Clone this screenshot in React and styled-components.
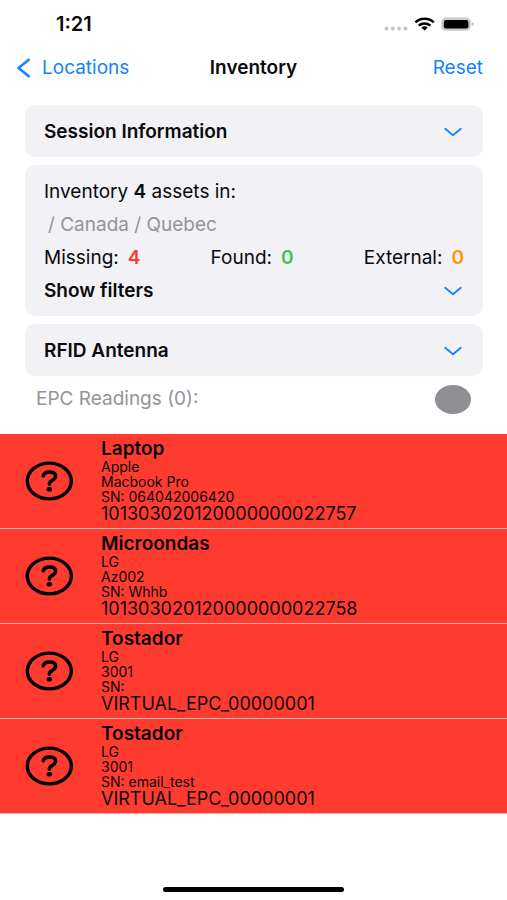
import React from 'react';
import styled, { createGlobalStyle } from 'styled-components';

const COLORS = {
  text: '#0a0a0c',
  blue: '#1583fb',
  card: '#f1f1f6',
  gray: '#949498',
  dot: '#8e8e93',
  red: '#ff3b30',
  green: '#34c759',
  orange: '#ff9500',
  divider: '#ffb0aa',
  black: '#000000',
};

const ASSETS = [
  { id: 1, name: 'Laptop', brand: 'Apple', model: 'Macbook Pro', sn: '064042006420', epc: '101303020120000000022757' },
  { id: 2, name: 'Microondas', brand: 'LG', model: 'Az002', sn: 'Whhb', epc: '101303020120000000022758' },
  { id: 3, name: 'Tostador', brand: 'LG', model: '3001', sn: '', epc: 'VIRTUAL_EPC_00000001' },
  { id: 4, name: 'Tostador', brand: 'LG', model: '3001', sn: 'email_test', epc: 'VIRTUAL_EPC_00000001' },
];

const Chevron = () => (
  <svg width="18" height="10" viewBox="0 0 18 10" fill="none" aria-hidden="true">
    <path d="M1.2 1.8L9 8.2L16.8 1.8" stroke={COLORS.blue} strokeWidth="1.8" strokeLinecap="round" strokeLinejoin="round" />
  </svg>
);

const BackArrow = () => (
  <svg width="14" height="20" viewBox="0 0 14 20" fill="none" aria-hidden="true">
    <path d="M12.8 1.8L2.4 10L12.8 18.2" stroke={COLORS.blue} strokeWidth="2.5" strokeLinecap="round" strokeLinejoin="round" />
  </svg>
);

const StatusIcons = () => (
  <svg width="92" height="16" viewBox="0 0 92 16" fill="none" aria-hidden="true">
    <g fill="#c4c4c6">
      <circle cx="3.5" cy="12.5" r="1.9" />
      <circle cx="9.8" cy="12.5" r="1.9" />
      <circle cx="16.1" cy="12.5" r="1.9" />
      <circle cx="22.4" cy="12.5" r="1.9" />
    </g>
    <g stroke="#000" strokeWidth="2.4">
      <path d="M32.4 6.4C37.4 1.6 45.8 1.6 50.8 6.4" />
      <path d="M35.8 9.6C39 6.7 44.2 6.7 47.4 9.6" />
    </g>
    <path d="M38.4 11.4C40.3 10 42.9 10 44.8 11.4L41.6 14.4Z" fill="#000" />
    <rect x="59" y="2.4" width="28" height="11.6" rx="4" fill="#d4d4d6" stroke="#c8c8ca" strokeWidth="1.6" />
    <rect x="60.8" y="3.9" width="24.6" height="8.6" rx="2" fill="#000" />
    <path d="M88.6 6.2Q91 6.6 91 8.1T88.6 10Z" fill="#c4c4c6" />
  </svg>
);

const QuestionIcon = () => (
  <svg width="48" height="40" viewBox="0 0 48 40" fill="none" aria-hidden="true">
    <ellipse cx="24.3" cy="20" rx="22" ry="17.9" stroke="#000" strokeWidth="3.4" />
    <path
      d="M18.2 14.8C18.8 12 21 10.9 24.4 10.9C28 10.9 30.6 12.4 30.6 15C30.6 17 29.3 18.2 27.2 19.4C25.2 20.5 24.3 21.2 24.3 23.2"
      stroke="#000"
      strokeWidth="3.5"
      strokeLinecap="round"
    />
    <ellipse cx="24.3" cy="28.2" rx="2.8" ry="2.3" fill="#000" />
  </svg>
);

const Collapsible = ({ title }) => (
  <DisclosureButton type="button" aria-expanded="false">
    {title}
    <Chevron />
  </DisclosureButton>
);

const Counter = ({ label, value, color }) => (
  <CounterWrapper>
    {label}:<CounterValue $color={color}>{value}</CounterValue>
  </CounterWrapper>
);

const AssetRow = ({ asset }) => (
  <Row>
    <QuestionIcon />
    <RowBody>
      <AssetName>{asset.name}</AssetName>
      <Detail>{asset.brand}</Detail>
      <Detail>{asset.model}</Detail>
      <Detail>SN: {asset.sn}</Detail>
      <Epc>{asset.epc}</Epc>
    </RowBody>
  </Row>
);

const App = () => (
  <>
    <GlobalStyle />
    <Screen>
      <StatusBar>
        <Clock>1:21</Clock>
        <StatusIcons />
      </StatusBar>
      <NavBar>
        <NavButton type="button">
          <BackArrow />
          Locations
        </NavButton>
        <Title>Inventory</Title>
        <NavButton type="button" $end>
          Reset
        </NavButton>
      </NavBar>
      <Cards>
        <Card>
          <Collapsible title="Session Information" />
        </Card>
        <Card>
          <Line>
            Inventory <strong>4</strong> assets in:
          </Line>
          <Path>/ Canada / Quebec</Path>
          <Counters>
            <Counter label="Missing" value={4} color={COLORS.red} />
            <Counter label="Found" value={0} color={COLORS.green} />
            <Counter label="External" value={0} color={COLORS.orange} />
          </Counters>
          <Collapsible title="Show filters" />
        </Card>
        <Card>
          <Collapsible title="RFID Antenna" />
        </Card>
      </Cards>
      <Readings>
        EPC Readings (0):
        <ReaderDot />
      </Readings>
      <List>
        {ASSETS.map((asset) => (
          <AssetRow key={asset.id} asset={asset} />
        ))}
      </List>
      <HomeIndicator />
    </Screen>
  </>
);

const GlobalStyle = createGlobalStyle`
  *, *::before, *::after {
    box-sizing: border-box;
  }
  body {
    margin: 0;
    background: white;
    color: ${COLORS.text};
    font-family: Inter, 'Liberation Sans', sans-serif;
    font-size: 19px;
    line-height: 24px;
  }
  button {
    border: none;
    padding: 0;
    background: none;
    color: inherit;
    font: inherit;
    cursor: pointer;
  }
  strong {
    font-weight: 600;
  }
`;

const Screen = styled.div`
  display: flex;
  flex-direction: column;
  min-height: 100vh;
`;

const StatusBar = styled.div`
  display: flex;
  align-items: center;
  justify-content: space-between;
  height: 48px;
  padding: 0 32px 0 56px;
`;

const Clock = styled.span`
  font-size: 20px;
  font-weight: 600;
`;

const NavBar = styled.nav`
  display: grid;
  grid-template-columns: 1fr auto 1fr;
  align-items: center;
  height: 40px;
  padding: 0 16px;
`;

const NavButton = styled.button`
  display: flex;
  align-items: center;
  gap: 12px;
  justify-self: ${p => p.$end ? 'end' : 'start'};
  padding-right: 8px;
  color: ${COLORS.blue};
`;

const Title = styled.h1`
  margin: 0;
  font-size: 19px;
  font-weight: 600;
`;

const Cards = styled.div`
  display: flex;
  flex-direction: column;
  gap: 8px;
  padding: 17px 24px 0 25px;
`;

const Card = styled.section`
  padding: 15px 19px 13px;
  border-radius: 10px;
  background: ${COLORS.card};
`;

const DisclosureButton = styled.button`
  display: flex;
  align-items: center;
  justify-content: space-between;
  width: 100%;
  padding-right: 2px;
  font-weight: 600;
  text-align: left;

  svg {
    flex: none;
  }
`;

const Line = styled.p`
  margin: 0 0 9px;
`;

const Path = styled(Line)`
  padding-left: 4px;
  color: ${COLORS.gray};
`;

const Counters = styled.div`
  display: flex;
  justify-content: space-between;
  margin-bottom: 9px;
`;

const CounterWrapper = styled.span`
  display: flex;
  gap: 9px;
`;

const CounterValue = styled.strong`
  color: ${p => p.$color};
`;

const Readings = styled.div`
  display: flex;
  align-items: center;
  justify-content: space-between;
  height: 46px;
  margin-bottom: 12px;
  padding: 0 36px;
  color: ${COLORS.gray};
`;

const ReaderDot = styled.span`
  width: 36px;
  height: 29px;
  border-radius: 50%;
  background: ${COLORS.dot};
`;

const List = styled.ul`
  margin: 0;
  padding: 0;
  list-style: none;
`;

const Row = styled.li`
  display: flex;
  align-items: center;
  gap: 28px;
  padding: 5px 25px;
  border-bottom: 1px solid ${COLORS.divider};
  background: ${COLORS.red};
`;

const RowBody = styled.div`
  min-width: 0;
`;

const AssetName = styled.h2`
  margin: 0;
  font-size: 19px;
  font-weight: 600;
  line-height: 20px;
`;

const Detail = styled.p`
  margin: 0;
  font-size: 14px;
  line-height: 15px;
`;

const Epc = styled.p`
  margin: 0;
  font-size: 18px;
  line-height: 19px;
`;

const HomeIndicator = styled.div`
  width: 181px;
  height: 5px;
  margin: auto auto 8px;
  border-radius: 3px;
  background: ${COLORS.black};
`;

export default App;
